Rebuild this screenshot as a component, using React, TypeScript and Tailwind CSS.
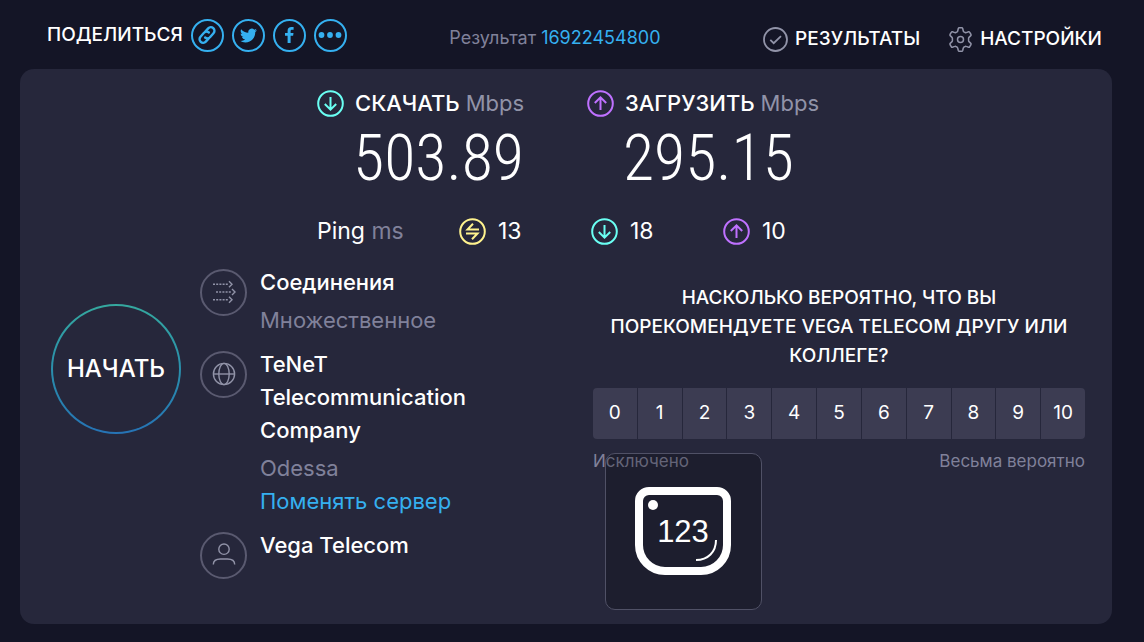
import type { ReactNode } from "react"

interface MetricProps {
  icon: ReactNode
  label: string
  value: string
}

interface ServerRowProps {
  icon: ReactNode
  title: string
  children?: ReactNode
}

const scores = [0, 1, 2, 3, 4, 5, 6, 7, 8, 9, 10]

function ShareLink({ label, children }: { label: string; children: ReactNode }) {
  return (
    <a
      href="#"
      aria-label={label}
      className="flex size-[33px] items-center justify-center rounded-full border-2 border-[#35b0f0] text-[#35b0f0]"
    >
      {children}
    </a>
  )
}

function DownIcon() {
  return (
    <svg viewBox="0 0 27 27" className="size-[27px] shrink-0 text-[#6afff3]" fill="none" stroke="currentColor" strokeWidth="2">
      <circle cx="13.5" cy="13.5" r="12.3" />
      <path d="M13.5 7v12.5M7.8 14l5.7 5.7 5.7-5.7" />
    </svg>
  )
}

function UpIcon() {
  return (
    <svg viewBox="0 0 27 27" className="size-[27px] shrink-0 text-[#bf71ff]" fill="none" stroke="currentColor" strokeWidth="2">
      <circle cx="13.5" cy="13.5" r="12.3" />
      <path d="M13.5 20V7.5M7.8 13l5.7-5.7 5.7 5.7" />
    </svg>
  )
}

function IdleIcon() {
  return (
    <svg viewBox="0 0 27 27" className="size-[27px] shrink-0 text-[#fff38e]" fill="none" stroke="currentColor" strokeWidth="2">
      <circle cx="13.5" cy="13.5" r="12.3" />
      <path d="M20 11.5H8.5l5.5-5.8M7 15.5h11.5l-5.5 5.8" />
    </svg>
  )
}

function ConnectionsIcon() {
  return (
    <svg viewBox="0 0 24 24" className="size-6" fill="none" stroke="currentColor" strokeWidth="1.4">
      <path d="M1 4.3h16M4 12h16M1 19.7h16" strokeDasharray="2 1.2" />
      <path d="M17 1.3l3 3-3 3M20 9l3 3-3 3M17 16.7l3 3-3 3" />
    </svg>
  )
}

function GlobeIcon() {
  return (
    <svg viewBox="0 0 24 24" className="size-6" fill="none" stroke="currentColor" strokeWidth="1.4">
      <circle cx="12" cy="12" r="10.6" />
      <ellipse cx="12" cy="12" rx="5.2" ry="10.6" />
      <path d="M1.4 12h21.2" />
    </svg>
  )
}

function PersonIcon() {
  return (
    <svg viewBox="0 0 24 24" className="size-6" fill="none" stroke="currentColor" strokeWidth="1.4">
      <circle cx="12" cy="6.2" r="5.2" />
      <path d="M1.3 21.5c0-3.700 3.200-5.500 7.200-5.500h7c4 0 7.200 1.800 7.200 5.500" />
    </svg>
  )
}

function SpeedMetric({ icon, label, value }: MetricProps) {
  return (
    <div className="w-[271px] last:w-auto">
      <div className="flex h-[30px] items-center gap-[11px]">
        {icon}
        <h2 className="whitespace-nowrap text-[22px] font-medium text-white">
          {label} <span className="font-normal text-[#9193a8]">Mbps</span>
        </h2>
      </div>
      <p className="pl-9 font-['Roboto_Condensed','Roboto',sans-serif] text-[64px] font-light leading-[80px] text-white">{value}</p>
    </div>
  )
}

function PingMetric({ icon, value }: { icon: ReactNode; value: number }) {
  return (
    <div className="flex w-[132px] items-center gap-3 last:w-auto">
      {icon}
      <span>{value}</span>
    </div>
  )
}

function ServerRow({ icon, title, children }: ServerRowProps) {
  return (
    <div className="flex gap-[13px]">
      <div className="mt-[3px] flex size-[47px] shrink-0 items-center justify-center rounded-full border-2 border-[#5a5a70] text-[#9193a8]">
        {icon}
      </div>
      <div className="max-w-[230px] text-[22px] leading-[33px]">
        <p className="font-medium text-white">{title}</p>
        {children && <div className="mt-[5px] text-[#80819a]">{children}</div>}
      </div>
    </div>
  )
}

function Header() {
  return (
    <header className="flex items-center justify-between pb-[15px] pl-[47px] pr-[42px] pt-[17px]">
      <div className="flex items-center gap-2">
        <span className="text-[19px] font-medium text-white">ПОДЕЛИТЬСЯ</span>
        <ShareLink label="Ссылка">
          <svg viewBox="0 0 20 20" className="size-5" fill="none" stroke="currentColor" strokeWidth="2.4" strokeLinecap="round">
            <path d="M8.3 6.6l2.9-3.200a3.600 3.600 0 0 1 5.300 4.900l-3.500 3.900a3.500 3.500 0 0 1-4.900.3" />
            <path d="M11.700 13.400l-2.900 3.200a3.600 3.600 0 0 1-5.300-4.900l3.500-3.900a3.500 3.500 0 0 1 4.900-.3" />
          </svg>
        </ShareLink>
        <ShareLink label="Twitter">
          <svg viewBox="0 0 24 24" className="size-[17px]" fill="currentColor">
            <path d="M23.950 4.570a10 10 0 0 1-2.820.770 4.960 4.960 0 0 0 2.160-2.720c-.950.560-2 .960-3.130 1.180a4.920 4.920 0 0 0-8.380 4.480C7.690 8.090 4.070 6.130 1.640 3.160a4.820 4.820 0 0 0-.670 2.480c0 1.710.870 3.210 2.190 4.100a4.900 4.900 0 0 1-2.230-.620v.060a4.920 4.920 0 0 0 3.950 4.830 5 5 0 0 1-2.210.080 4.940 4.940 0 0 0 4.600 3.420A9.870 9.870 0 0 1 0 19.540a13.990 13.990 0 0 0 7.560 2.210c9.050 0 14-7.500 14-13.980 0-.210 0-.420-.020-.630a9.940 9.940 0 0 0 2.460-2.550z" />
          </svg>
        </ShareLink>
        <ShareLink label="Facebook">
          <svg viewBox="0 0 20 20" className="size-5" fill="currentColor">
            <path d="M11.600 18v-7.200h2.500l.4-2.900h-2.900V6.100c0-.8.3-1.400 1.500-1.400h1.500V2.100C14.300 2.100 13.500 2 12.400 2 10.100 2 8.600 3.300 8.600 5.700v2.200H6v2.900h2.600V18z" />
          </svg>
        </ShareLink>
        <ShareLink label="Ещё">
          <svg viewBox="0 0 24 8" className="h-2 w-6" fill="currentColor">
            <circle cx="3.5" cy="4" r="2.9" />
            <circle cx="12" cy="4" r="2.9" />
            <circle cx="20.5" cy="4" r="2.9" />
          </svg>
        </ShareLink>
      </div>

      <p className="mt-1 text-[18px] text-[#80819a]">
        Результат{" "}
        <a href="#" className="text-[#35b0f0]">
          16922454800
        </a>
      </p>

      <nav className="mt-2 flex items-center gap-7 text-[19px] font-medium text-white">
        <a href="#" className="flex items-center gap-[7px]">
          <svg viewBox="0 0 25 25" className="size-[25px] text-[#9193a8]" fill="none" stroke="currentColor" strokeWidth="1.8">
            <circle cx="12.5" cy="12.5" r="11.5" />
            <path d="M7.3 12.800l3.400 3.400 7.300-7" />
          </svg>
          РЕЗУЛЬТАТЫ
        </a>
        <a href="#" className="flex items-center gap-[7px]">
          <svg viewBox="0 0 25 25" className="size-[25px] text-[#9193a8]" fill="none" stroke="currentColor" strokeWidth="1.5" strokeLinejoin="round">
            <path d="M10.300 1.500q.2-.7.900-.7h2.600q.7 0 .9.700l.6 2.500q.1.500.6.800l1.300.7q.5.300 1 .1l2.400-.8q.7-.2 1 .4l1.400 2.300q.3.600-.2 1.100l-1.800 1.800q-.4.400-.4.900v2.400q0 .5.400.9l1.800 1.800q.5.500.2 1.100l-1.400 2.300q-.3.600-1 .4l-2.400-.8q-.5-.2-1 .1l-1.300.7q-.5.300-.6.800l-.6 2.500q-.2.700-.9.700h-2.600q-.7 0-.9-.7L9.700 21q-.1-.5-.6-.8l-1.300-.7q-.5-.3-1-.1l-2.400.8q-.7.200-1-.4L2 17.500q-.3-.6.200-1.100L4 14.600q.4-.4.400-.9v-2.400q0-.5-.4-.9L2.200 8.600Q1.700 8.100 2 7.500l1.400-2.300q.3-.6 1-.4l2.400.8q.5.200 1-.1l1.300-.7q.5-.3.6-.8z" />
            <circle cx="12.5" cy="12.5" r="3" />
          </svg>
          НАСТРОЙКИ
        </a>
      </nav>
    </header>
  )
}

function Survey() {
  return (
    <section className="relative pt-[17px]">
      <h3 className="px-3 text-center text-[19px] font-medium leading-[29px] text-white">
        НАСКОЛЬКО ВЕРОЯТНО, ЧТО ВЫ ПОРЕКОМЕНДУЕТЕ VEGA TELECOM ДРУГУ ИЛИ КОЛЛЕГЕ?
      </h3>
      <div className="mt-[18px] grid grid-cols-11 gap-px overflow-hidden rounded">
        {scores.map((score) => (
          <button key={score} type="button" className="h-[51px] bg-[#3c3c52] text-[19px] text-white">
            {score}
          </button>
        ))}
      </div>
      <div className="mt-[11px] flex justify-between text-[17px] leading-[22px] text-[#80819a]">
        <span>Исключено</span>
        <span>Весьма вероятно</span>
      </div>

      {/* Виджет поверх подписей шкалы */}
      <div className="absolute left-3 top-[187px] flex size-[157px] items-center justify-center rounded-[10px] border border-[#505166] bg-black/22">
        <svg viewBox="0 0 96 88" className="h-[88px] w-24" fill="none" stroke="#fff">
          <path d="M14 4h68a10 10 0 0 1 10 10v44a26 26 0 0 1-26 26H30A26 26 0 0 1 4 58V14A10 10 0 0 1 14 4z" strokeWidth="8" />
          <circle cx="18" cy="18" r="5" fill="#fff" stroke="none" />
          <path d="M81 53c0 12-8 20-20 20" strokeWidth="2" />
          <text x="48" y="55" textAnchor="middle" fill="#fff" stroke="none" className="font-['Liberation_Sans',sans-serif] text-[31px]">
            123
          </text>
        </svg>
      </div>
    </section>
  )
}

export default function App() {
  return (
    <div className="min-h-screen bg-[#141526] font-['Inter',sans-serif]">
      <Header />

      <main className="ml-5 mr-8 rounded-[14px] bg-[#26273b] pb-[45px] pl-[31px] pr-[27px] pt-5">
        <div className="mx-auto flex w-[502px]">
          <SpeedMetric icon={<DownIcon />} label="СКАЧАТЬ" value="503.89" />
          <SpeedMetric icon={<UpIcon />} label="ЗАГРУЗИТЬ" value="295.15" />
        </div>

        <div className="mx-auto mt-[17px] flex h-8 w-[502px] items-center text-[23px] text-white">
          <p className="w-[142px]">
            Ping <span className="text-[#80819a]">ms</span>
          </p>
          <PingMetric icon={<IdleIcon />} value={13} />
          <PingMetric icon={<DownIcon />} value={18} />
          <PingMetric icon={<UpIcon />} value={10} />
        </div>

        <div className="mt-[18px] grid grid-cols-[130px_19fr_25fr] gap-x-[19px]">
          <button
            type="button"
            className="mt-[38px] size-[130px] rounded-full bg-linear-to-b from-[#35a99f] to-[#2673b5] p-0.5 text-[24px] font-medium text-white"
          >
            <span className="flex size-full items-center justify-center rounded-full bg-[#26273b]">НАЧАТЬ</span>
          </button>

          <section className="flex flex-col gap-[11px]">
            <ServerRow icon={<ConnectionsIcon />} title="Соединения">
              Множественное
            </ServerRow>
            <ServerRow icon={<GlobeIcon />} title="TeNeT Telecommunication Company">
              <p>Odessa</p>
              <a href="#" className="block text-[#35b0f0]">
                Поменять сервер
              </a>
            </ServerRow>
            <ServerRow icon={<PersonIcon />} title="Vega Telecom" />
          </section>

          <Survey />
        </div>
      </main>
    </div>
  )
}
